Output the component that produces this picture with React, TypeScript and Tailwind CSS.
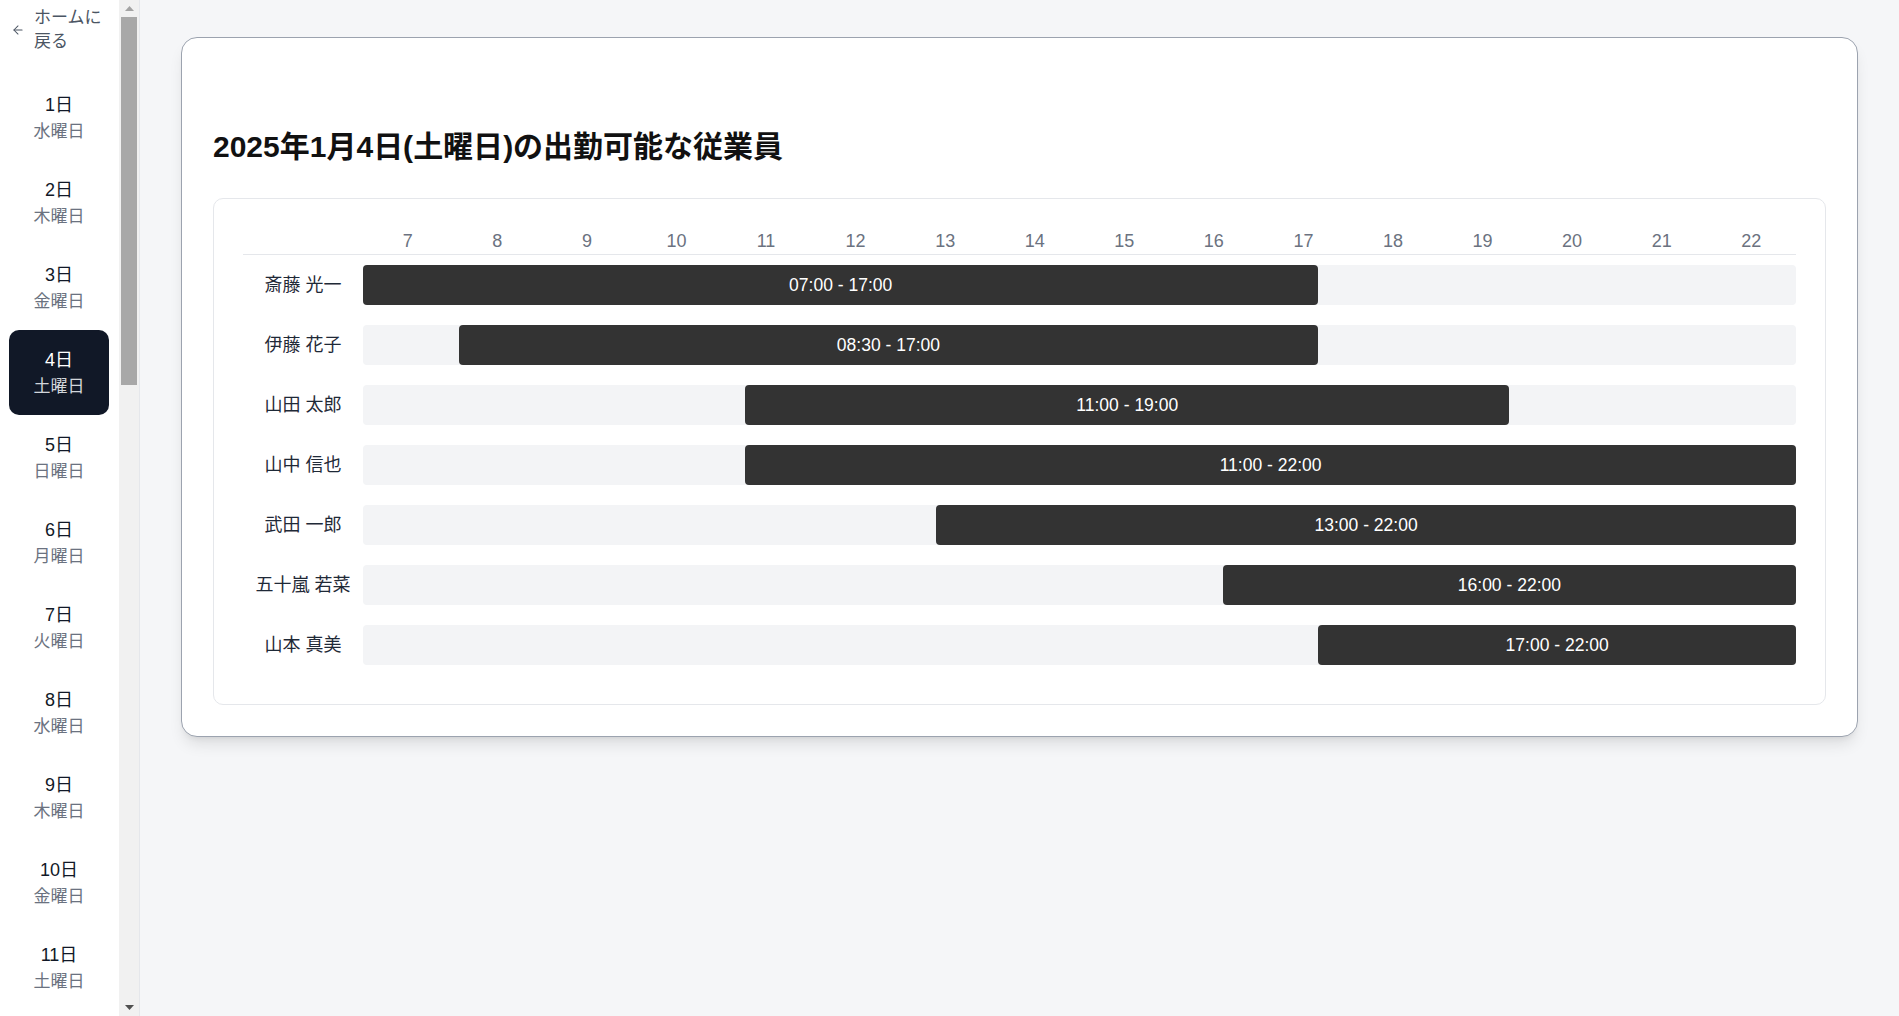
import * as React from "react";
import { ArrowLeft } from "lucide-react";

/* ------------------------------ Types ------------------------------ */
type Shift = { name: string; start: string; end: string };

/* --------------------------- Data ------------------------ */
const WEEKDAYS = ["日曜日", "月曜日", "火曜日", "水曜日", "木曜日", "金曜日", "土曜日"];

// 2025年1月: 1日は水曜日
const DAYS = Array.from({ length: 31 }, (_, i) => ({
  day: i + 1,
  weekday: WEEKDAYS[(3 + i) % 7],
}));

const SHIFTS: Shift[] = [
  { name: "斎藤 光一", start: "07:00", end: "17:00" },
  { name: "伊藤 花子", start: "08:30", end: "17:00" },
  { name: "山田 太郎", start: "11:00", end: "19:00" },
  { name: "山中 信也", start: "11:00", end: "22:00" },
  { name: "武田 一郎", start: "13:00", end: "22:00" },
  { name: "五十嵐 若菜", start: "16:00", end: "22:00" },
  { name: "山本 真美", start: "17:00", end: "22:00" },
];

const FIRST_HOUR = 7;
const LAST_HOUR = 22;
const HOURS = Array.from({ length: LAST_HOUR - FIRST_HOUR + 1 }, (_, i) => FIRST_HOUR + i);
const SPAN = LAST_HOUR - FIRST_HOUR;

// bars snap to the whole hour of the start time
const toHour = (t: string) => parseInt(t.split(":")[0], 10);

/* ----------------------------- Sidebar --------------------------- */
function Sidebar({ selected }: { selected: number }) {
  const listRef = React.useRef<HTMLElement>(null);
  const trackRef = React.useRef<HTMLDivElement>(null);
  const [thumb, setThumb] = React.useState({ top: 0, height: 0 });

  // custom scroll rail: thumb follows the list's scroll position
  const syncThumb = React.useCallback(() => {
    const list = listRef.current;
    const track = trackRef.current;
    if (!list || !track) return;
    const ratio = list.clientHeight / list.scrollHeight;
    const height = Math.max(24, track.clientHeight * ratio);
    const maxScroll = list.scrollHeight - list.clientHeight || 1;
    const top = (list.scrollTop / maxScroll) * (track.clientHeight - height);
    setThumb({ top, height });
  }, []);

  React.useLayoutEffect(() => {
    syncThumb();
    window.addEventListener("resize", syncThumb);
    return () => window.removeEventListener("resize", syncThumb);
  }, [syncThumb]);

  const scrollBy = (dy: number) => listRef.current?.scrollBy({ top: dy });

  return (
    <aside className="flex h-screen w-[140px] shrink-0 border-r border-[#e5e7eb] bg-white">
      <nav
        ref={listRef}
        onScroll={syncThumb}
        className="h-full w-[119px] shrink-0 overflow-y-auto pt-[6px] [scrollbar-width:none]"
      >
        <a href="#" className="flex items-center gap-[9px] pl-[11px] text-[17px] leading-[24px] text-[#4b5563]">
          <ArrowLeft className="h-3.5 w-3.5 shrink-0" strokeWidth={1.75} aria-hidden />
          <span className="w-[72px]">ホームに戻る</span>
        </a>

        <ul className="mt-[21px]">
          {DAYS.map((d) => {
            const active = d.day === selected;
            return (
              <li key={d.day}>
                <button
                  className={[
                    "ml-[9px] flex h-[85px] w-[100px] flex-col items-center justify-center rounded-[10px]",
                    active ? "bg-[#111827]" : "",
                  ].join(" ")}
                >
                  <span className={["text-[18px] leading-[28px]", active ? "text-white" : "text-[#111827]"].join(" ")}>
                    {d.day}日
                  </span>
                  <span className={["text-[17px] leading-[26px]", active ? "text-[#d1d5db]" : "text-[#6b7280]"].join(" ")}>
                    {d.weekday}
                  </span>
                </button>
              </li>
            );
          })}
        </ul>
      </nav>

      {/* scroll rail */}
      <div className="flex w-[20px] flex-col bg-[#f1f1f1]">
        <button onClick={() => scrollBy(-85)} className="flex h-[17px] items-center justify-center" aria-label="上へ">
          <svg width="9" height="5" viewBox="0 0 9 5" aria-hidden>
            <polygon points="4.5,0 9,5 0,5" fill="#a3a3a3" />
          </svg>
        </button>
        <div ref={trackRef} className="relative flex-1">
          <div
            className="absolute left-[2px] right-[2px] bg-[#a8a8a8]"
            style={{ top: thumb.top, height: thumb.height }}
          />
        </div>
        <button onClick={() => scrollBy(85)} className="flex h-[17px] items-center justify-center" aria-label="下へ">
          <svg width="9" height="5" viewBox="0 0 9 5" aria-hidden>
            <polygon points="0,0 9,0 4.5,5" fill="#505050" />
          </svg>
        </button>
      </div>
    </aside>
  );
}

/* ----------------------------- Timeline --------------------------- */
function Timeline({ shifts }: { shifts: Shift[] }) {
  return (
    <div className="rounded-[10px] border border-[#e5e7eb] px-[29px] pb-[29px] pt-[30px]">
      {/* hour header */}
      <div className="flex border-b border-[#e5e7eb] pb-[1px]">
        <div className="w-[120px] shrink-0" />
        <div className="flex flex-1">
          {HOURS.map((h) => (
            <div key={h} className="flex-1 text-center text-[18px] leading-[24px] text-[#6b7280]">
              {h}
            </div>
          ))}
        </div>
      </div>

      {/* rows */}
      {shifts.map((s) => {
        const left = ((toHour(s.start) - FIRST_HOUR) / SPAN) * 100;
        const right = ((toHour(s.end) - FIRST_HOUR) / SPAN) * 100;
        return (
          <div key={s.name} className="flex h-[60px] items-center">
            <div className="w-[120px] shrink-0 text-center text-[18px] text-[#1f2937]">{s.name}</div>
            <div className="relative h-10 flex-1 rounded bg-[#f3f4f6]">
              <div
                className="absolute inset-y-0 flex items-center justify-center rounded bg-[#333333] text-[17.5px] font-medium text-white"
                style={{ left: `${left}%`, width: `${right - left}%` }}
              >
                {s.start} - {s.end}
              </div>
            </div>
          </div>
        );
      })}
    </div>
  );
}

/* ----------------------------- Page --------------------------- */
export default function App() {
  const selected = 4;

  return (
    <div className="flex h-screen overflow-hidden font-['Liberation_Sans','Noto_Sans_CJK_JP',sans-serif]">
      <Sidebar selected={selected} />

      <main className="min-w-0 flex-1 overflow-auto bg-[#f5f6f8] px-[41px] pt-[37px]">
        <section className="rounded-2xl border border-[#9ca3af] bg-white px-[31px] pb-[31px] pt-[91px] shadow-lg">
          <h1 className="mb-[33px] text-[30px] font-bold leading-[36px] text-[#111111]">
            2025年1月{selected}日({DAYS[selected - 1].weekday})の出勤可能な従業員
          </h1>
          <Timeline shifts={SHIFTS} />
        </section>
      </main>
    </div>
  );
}
